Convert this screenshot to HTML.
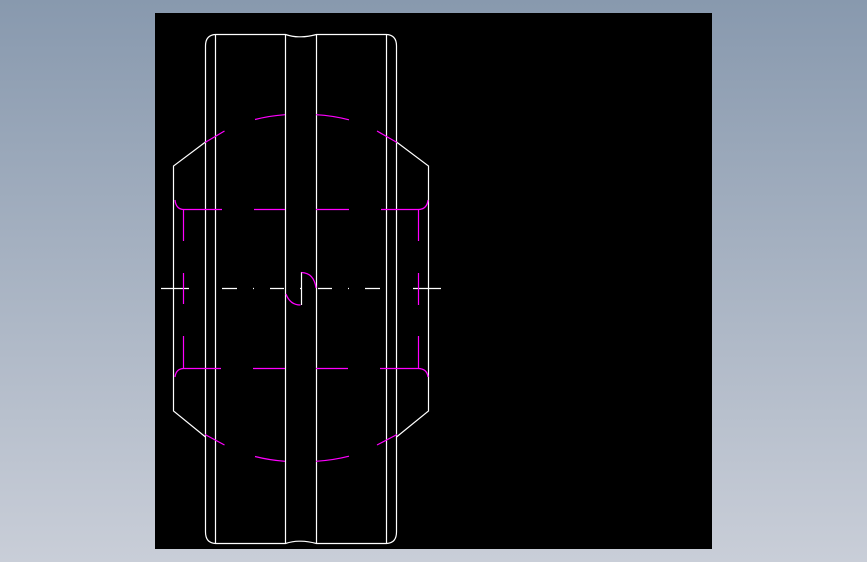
<!DOCTYPE html>
<html><head><style>
html,body{margin:0;padding:0;width:867px;height:562px;overflow:hidden;background:linear-gradient(#8899ae,#c9ced8);}
svg{position:absolute;left:0;top:0}
</style></head><body>
<svg width="867" height="562" viewBox="0 0 867 562">
<rect x="155" y="13" width="557" height="536" fill="#000"/>
<g fill="none" stroke="#fff" stroke-width="1.2">
<path d="M215.5 34.5 H285.5 Q293 37 300 36.8 Q307 37 316.5 34.5 H386.5 Q396.5 35 396.5 46 V532 Q396.5 543 386.5 543.5 H316.5 Q307 541 300 541.2 Q293 541 285.5 543.5 H215.5 Q205.5 543 205.5 532 V46 Q205.5 35 215.5 34.5 Z"/>
<path d="M215.5 34.5 V543.5 M285.5 34.5 V543.5 M316.5 34.5 V543.5 M386.5 34.5 V543.5"/>
<path d="M205.5 142 L173.5 166 V411 L205.5 437"/>
<path d="M396.5 142 L428.5 166 V411 L396.5 437"/>
<path d="M161 288.5 H189 M222 288.5 H237 M253 288.5 H254 M270 288.5 H284 M300 288.5 H301 M318 288.5 H332 M348 288.5 H349 M365 288.5 H380 M413 288.5 H441"/>
<path d="M301.5 272 V305"/>
</g>
<g fill="none" stroke="#ff00ff" stroke-width="1.2">
<path d="M255 119.5 A174 174 0 0 1 285 114.7 M316 114.7 A174 174 0 0 1 349 119.8 M224.5 131 L205 142.5 M377 131 L397 142.5"/>
<path d="M255 456.5 A174 174 0 0 0 285 461.3 M316 461.3 A174 174 0 0 0 349 456.2 M224.5 445 L205 434.5 M377 445 L397 434.5"/>
<path d="M175 200 Q176 209.5 184 209.5 H222 M254 209.5 H285 M316 209.5 H349 M381 209.5 H418 Q427 209.5 428 200"/>
<path d="M175 377 Q176 368.5 184 368.5 H221 M253 368.5 H285 M316 368.5 H348 M380 368.5 H418 Q427 368.5 428 377"/>
<path d="M183.5 209.5 V241 M183.5 273 V304 M183.5 336 V368.5 M418.5 209.5 V241 M418.5 273 V305 M418.5 336 V368.5"/>
<path d="M301.5 272.5 Q314 273 316 288 M286 294 Q290 305 300.5 305"/>
</g>
</svg>
</body></html>
